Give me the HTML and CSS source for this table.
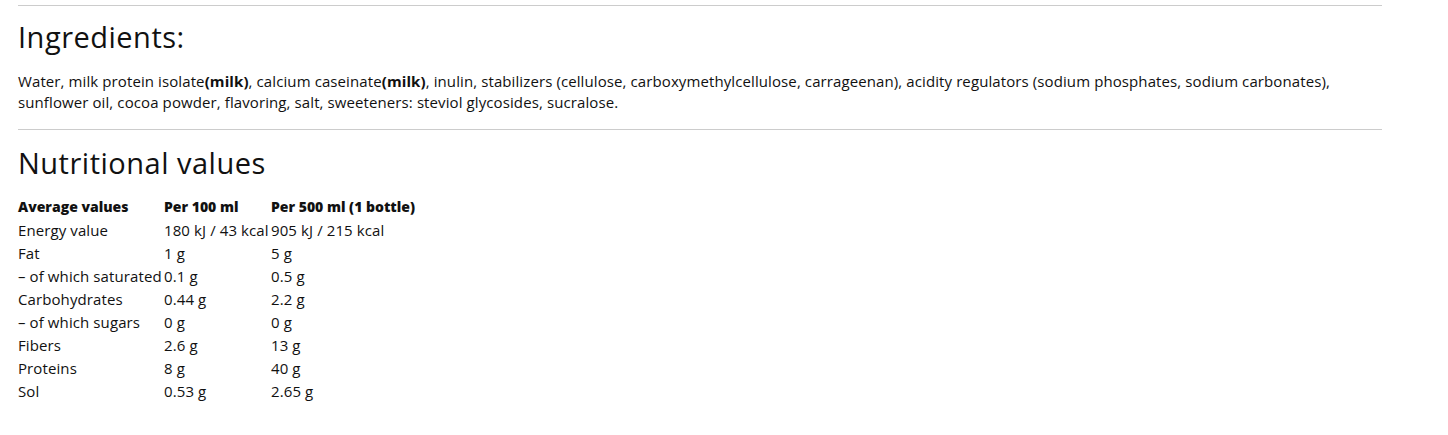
FILE: index.html
```html
<!DOCTYPE html>
<html lang="en">
<head>
<meta charset="utf-8">
<title>Ingredients</title>
<link rel="stylesheet" href="styles.css">
</head>
<body>
<div class="page">
  <hr class="rule">
  <h2 class="title title-first">Ingredients:</h2>
  <p class="ingredients">Water, milk protein isolate<b>(milk)</b>, calcium caseinate<b>(milk)</b>, inulin, stabilizers (cellulose, carboxymethylcellulose, carrageenan), acidity regulators (sodium phosphates, sodium carbonates), sunflower oil, cocoa powder, flavoring, salt, sweeteners: steviol glycosides, sucralose.</p>
  <hr class="rule">
  <h2 class="title">Nutritional values</h2>
  <table class="nutri">
    <colgroup><col class="c1"><col class="c2"><col class="c3"></colgroup>
    <thead>
      <tr><th>Average values</th><th>Per 100 ml</th><th>Per 500 ml (1 bottle)</th></tr>
    </thead>
    <tbody>
      <tr><td>Energy value</td><td>180 kJ / 43 kcal</td><td>905 kJ / 215 kcal</td></tr>
      <tr><td>Fat</td><td>1 g</td><td>5 g</td></tr>
      <tr><td>– of which saturated</td><td>0.1 g</td><td>0.5 g</td></tr>
      <tr><td>Carbohydrates</td><td>0.44 g</td><td>2.2 g</td></tr>
      <tr><td>– of which sugars</td><td>0 g</td><td>0 g</td></tr>
      <tr><td>Fibers</td><td>2.6 g</td><td>13 g</td></tr>
      <tr><td>Proteins</td><td>8 g</td><td>40 g</td></tr>
      <tr><td>Sol</td><td>0.53 g</td><td>2.65 g</td></tr>
    </tbody>
  </table>
</div>
</body>
</html>
```
FILE: styles.css
```css
html, body {
  margin: 0;
  padding: 0;
  background: #ffffff;
}
body {
  font-family: "Open Sans", "Noto Sans", sans-serif;
  color: #111111;
}
.page {
  width: 1364px;
  margin-left: 18px;
}
.rule {
  border: 0;
  border-top: 1px solid #cccccc;
  margin: 5px 0 0 0;
  height: 0;
}
.title {
  font-size: 29px;
  font-weight: 400;
  line-height: 34px;
  margin: 16px 0 15px 0;
  letter-spacing: 0.5px;
}
.title-first {
  margin: 14px 0 17px 0;
}
.ingredients {
  font-size: 15px;
  line-height: 21px;
  margin: 0 0 16px 0;
  letter-spacing: 0.1px;
}
.ingredients b {
  font-weight: 700;
}
.nutri {
  border-collapse: collapse;
  font-size: 15px;
  table-layout: fixed;
}
.nutri .c1 { width: 146px; }
.nutri .c2 { width: 107px; }
.nutri .c3 { width: 200px; }
.nutri th, .nutri td {
  padding: 0;
  height: 23px;
  text-align: left;
  white-space: nowrap;
  vertical-align: middle;
}
.nutri th {
  font-weight: 800;
  font-size: 14px;
  letter-spacing: 0;
}
.nutri td {
  letter-spacing: 0.1px;
}
```
